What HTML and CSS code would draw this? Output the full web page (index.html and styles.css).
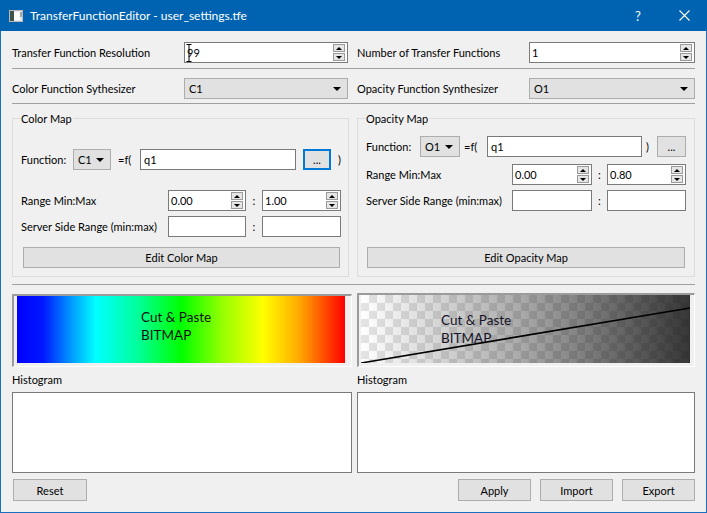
FILE: index.html
```html
<!DOCTYPE html>
<html lang="en">
<head>
<meta charset="utf-8">
<title>TransferFunctionEditor</title>
<link rel="stylesheet" href="styles.css">
</head>
<body>
<div class="window">
  <header class="titlebar">
    <svg class="app-icon" width="14" height="12" viewBox="0 0 14 12">
      <rect x="0.5" y="0.5" width="13" height="11" fill="#e9e9e9" stroke="#b8b8b8"/>
      <rect x="1" y="1" width="4" height="10" fill="#41544a"/>
      <rect x="5" y="2" width="6" height="8" fill="#ffffff"/>
      <rect x="11" y="2" width="2" height="5" fill="#a5a5a5"/>
    </svg>
    <span class="title">TransferFunctionEditor - user_settings.tfe</span>
    <span class="tb-btn help">?</span>
    <span class="tb-btn close"><svg width="11" height="11" viewBox="0 0 11 11"><path d="M0.5 0.5L10.5 10.5M10.5 0.5L0.5 10.5" stroke="#fff" stroke-width="1.1"/></svg></span>
  </header>

  <main class="content">
    <div class="form-row">
      <span class="lbl">Transfer Function Resolution</span>
      <div class="spin">
        <span class="val">99</span>
        <svg class="ibeam" width="6" height="18" viewBox="0 0 6 18"><path d="M0.5 0.5h2.5M3 0.5h2.5M3 0.5v17M0.5 17.5h5" stroke="#000" stroke-width="1" fill="none"/></svg>
        <span class="spin-btns"><i class="up"></i><i class="down"></i></span>
      </div>
      <span></span>
      <span class="lbl">Number of Transfer Functions</span>
      <div class="spin">
        <span class="val">1</span>
        <span class="spin-btns"><i class="up"></i><i class="down"></i></span>
      </div>
    </div>
    <div class="sep sep-1"></div>
    <div class="form-row row-2">
      <span class="lbl">Color Function Sythesizer</span>
      <div class="combo"><span class="cval">C1</span><i class="arrow"></i></div>
      <span></span>
      <span class="lbl">Opacity Function Synthesizer</span>
      <div class="combo"><span class="cval">O1</span><i class="arrow"></i></div>
    </div>
    <div class="sep sep-2"></div>

    <div class="groups">
      <section class="group color-group">
        <div class="group-title">Color Map</div>
        <div class="fn-row">
          <span class="fn-label">Function:</span>
          <div class="combo fn-combo"><span class="cval">C1</span><i class="arrow"></i></div>
          <span class="eqf">=f(</span>
          <div class="field fn-field">q1</div>
          <div class="btn dots focused">...</div>
          <span class="paren">)</span>
        </div>
        <div class="range-row">
          <span>Range Min:Max</span>
          <div class="spin"><span class="val">0.00</span><span class="spin-btns"><i class="up"></i><i class="down"></i></span></div>
          <span class="colon">:</span>
          <div class="spin"><span class="val">1.00</span><span class="spin-btns"><i class="up"></i><i class="down"></i></span></div>
        </div>
        <div class="range-row server-row">
          <span>Server Side Range (min:max)</span>
          <div class="field"></div>
          <span class="colon">:</span>
          <div class="field"></div>
        </div>
        <div class="btn edit-btn">Edit Color Map</div>
      </section>

      <section class="group opacity-group">
        <div class="group-title">Opacity Map</div>
        <div class="fn-row">
          <span class="fn-label">Function:</span>
          <div class="combo fn-combo"><span class="cval">O1</span><i class="arrow"></i></div>
          <span class="eqf">=f(</span>
          <div class="field fn-field">q1</div>
          <span class="paren">)</span>
          <div class="btn dots">...</div>
        </div>
        <div class="range-row">
          <span>Range Min:Max</span>
          <div class="spin"><span class="val">0.00</span><span class="spin-btns"><i class="up"></i><i class="down"></i></span></div>
          <span class="colon">:</span>
          <div class="spin"><span class="val">0.80</span><span class="spin-btns"><i class="up"></i><i class="down"></i></span></div>
        </div>
        <div class="range-row server-row">
          <span>Server Side Range (min:max)</span>
          <div class="field"></div>
          <span class="colon">:</span>
          <div class="field"></div>
        </div>
        <div class="btn edit-btn">Edit Opacity Map</div>
      </section>
    </div>

    <div class="sep sep-3"></div>

    <div class="bitmaps">
      <div class="frame color-frame">
        <div class="bitmap color-bitmap">Cut &amp; Paste<br>BITMAP</div>
      </div>
      <div class="frame opacity-frame">
        <div class="bitmap opacity-bitmap">
          <span class="bm-text">Cut &amp; Paste<br>BITMAP</span>
          <svg class="ramp" viewBox="0 0 329 68" preserveAspectRatio="none"><line x1="0" y1="68" x2="329" y2="13" stroke="#000" stroke-width="1.6"/></svg>
        </div>
      </div>
    </div>

    <div class="hist">
      <div class="hist-col">
        <div class="hist-label">Histogram</div>
        <div class="hist-box"></div>
      </div>
      <div class="hist-col">
        <div class="hist-label">Histogram</div>
        <div class="hist-box"></div>
      </div>
    </div>

    <div class="actions">
      <div class="btn act reset">Reset</div>
      <div class="spacer"></div>
      <div class="btn act">Apply</div>
      <div class="btn act">Import</div>
      <div class="btn act">Export</div>
    </div>
  </main>
</div>
</body>
</html>
```

FILE: styles.css
```css
* { box-sizing: border-box; }
html, body { margin: 0; padding: 0; }
body {
  font-family: Lato, "Noto Sans", sans-serif;
  font-size: 11px;
  color: #000;
  background: #f0f0f0;
}

.window {
  width: 707px;
  height: 513px;
  background: #f0f0f0;
  border: 1px solid #1a6fc1;
  border-top: none;
  display: flex;
  flex-direction: column;
}

/* Title bar */
.titlebar {
  height: 31px;
  margin: 0 -1px;
  background: #0063b1;
  color: #fff;
  display: flex;
  align-items: center;
  flex: none;
}
.app-icon { margin-left: 9px; flex: none; }
.title {
  margin-left: 7px;
  font-size: 12px;
  flex: 1;
}
.tb-btn {
  width: 46px;
  height: 31px;
  display: flex;
  align-items: center;
  justify-content: center;
  font-size: 13px;
}
.tb-btn.close svg { display: block; }

/* Content */
.content {
  padding: 11px 11px 0 11px;
  display: flex;
  flex-direction: column;
  flex: 1;
}

.form-row {
  display: grid;
  grid-template-columns: 172px 164px 9px 172px 166px;
  height: 21px;
  align-items: center;
}
.row-2 { margin-top: 9px; }

.sep { height: 1px; background: #a0a0a0; flex: none; }
.sep-1 { margin-top: 5px; }
.sep-2 { margin-top: 4px; }
.sep-3 { margin-top: 7px; }

/* Controls */
.spin {
  position: relative;
  height: 21px;
  border: 1px solid #7a7a7a;
  background: #fff;
  display: flex;
  align-items: center;
  padding-left: 2px;
}
.spin .val { flex: 1; }
.ibeam {
  position: absolute;
  left: 1px;
  top: 1px;
}
.spin-btns {
  display: flex;
  flex-direction: column;
  gap: 1px;
  margin-right: 2px;
}
.spin-btns i {
  display: flex;
  align-items: center;
  justify-content: center;
  width: 12px;
  height: 8px;
  border: 1px solid #9a9a9a;
  background: #e5e5e5;
}
.spin-btns i::after {
  content: "";
  border-left: 3px solid transparent;
  border-right: 3px solid transparent;
}
.spin-btns .up::after { border-bottom: 3px solid #000; }
.spin-btns .down::after { border-top: 3px solid #000; }

.combo {
  height: 21px;
  border: 1px solid #adadad;
  background: #e1e1e1;
  display: flex;
  align-items: center;
  padding: 0 6px 0 4px;
}
.cval { flex: 1; }
.arrow {
  width: 0;
  height: 0;
  border-left: 4px solid transparent;
  border-right: 4px solid transparent;
  border-top: 4px solid #000;
}

.field {
  height: 21px;
  border: 1px solid #7a7a7a;
  background: #fff;
  display: flex;
  align-items: center;
  padding-left: 3px;
}

.btn {
  height: 21px;
  border: 1px solid #adadad;
  background: #e1e1e1;
  display: flex;
  align-items: center;
  justify-content: center;
}
.btn.focused { border: 2px solid #0078d7; }

/* Group boxes */
.groups {
  margin-top: 14px;
  display: grid;
  grid-template-columns: 337px 338px;
  column-gap: 8px;
}
.group {
  border: 1px solid #dcdcdc;
  display: flex;
  flex-direction: column;
  padding: 0 0 8px 0;
}
.group-title {
  margin: -8px 0 0 7px;
  padding: 0 1px;
  line-height: 16px;
  background: #f0f0f0;
  width: max-content;
}

.fn-row {
  display: flex;
  align-items: center;
  height: 21px;
  padding-left: 8px;
}
.color-group .fn-row { margin-top: 22px; }
.opacity-group .fn-row { margin-top: 9px; }

.color-group .fn-label { width: 52px; }
.color-group .fn-combo { width: 38px; }
.color-group .eqf { margin-left: 7px; width: 22px; }
.color-group .fn-field { width: 156px; }
.color-group .dots { width: 28px; margin-left: 7px; }
.color-group .paren { margin-left: 7px; }

.opacity-group .fn-label { width: 54px; }
.opacity-group .fn-combo { width: 40px; }
.opacity-group .eqf { margin-left: 4px; width: 23px; }
.opacity-group .fn-field { width: 155px; }
.opacity-group .paren { margin-left: 4px; width: 7px; }
.opacity-group .dots { width: 29px; margin-left: 4px; }

.range-row {
  display: grid;
  align-items: center;
  height: 21px;
  padding-left: 8px;
}
.color-group .range-row { grid-template-columns: 147px 78px 16px 79px; }
.opacity-group .range-row { grid-template-columns: 146px 80px 15px 79px; }
.colon { text-align: center; }

.color-group .range-row { margin-top: 20px; }
.color-group .server-row { margin-top: 5px; }
.opacity-group .range-row { margin-top: 7px; }
.opacity-group .server-row { margin-top: 5px; }

.edit-btn { flex: none; }
.color-group .edit-btn { margin: 10px 0 0 10px; width: 317px; }
.opacity-group .edit-btn { margin: auto 0 0 9px; width: 318px; }

/* Bitmaps */
.bitmaps {
  margin-top: 8px;
  display: grid;
  grid-template-columns: 340px 338px;
  column-gap: 5px;
  align-items: start;
}
.frame {
  border-style: solid;
  border-width: 2px 1px 1px 2px;
  border-color: #9b9b9b #ffffff #ffffff #9b9b9b;
}
.color-frame {
  margin-top: 1px;
  padding: 0 6px 3px 3px;
}
.opacity-frame {
  padding: 0 4px 3px 2px;
}
.bitmap {
  font-size: 13.5px;
  line-height: 18px;
  color: #111;
}
.color-bitmap {
  height: 67px;
  padding: 12px 0 0 124px;
  background: linear-gradient(to right,
    #0000ff 0%, #0018ff 8%, #00a0ff 17%, #00ffff 24%, #00ff99 37%,
    #00ff00 50%, #99ff00 63%, #ffff00 75%, #ffaa00 86%, #ff0000 100%);
}
.opacity-bitmap {
  position: relative;
  height: 68px;
  padding: 16px 0 0 80px;
  background-image:
    linear-gradient(to right, rgba(255,255,255,0.55), rgba(130,130,130,0.7) 50%, rgba(38,38,38,0.92)),
    conic-gradient(#c4c4c4 0 25%, #ffffff 0 50%, #c4c4c4 0 75%, #ffffff 0);
  background-size: 100% 100%, 16px 16px;
  color: #141428;
}
.bm-text { position: relative; }
.ramp {
  position: absolute;
  left: 0;
  top: 0;
  width: 100%;
  height: 100%;
}

/* Histograms */
.hist {
  margin-top: 5px;
  display: grid;
  grid-template-columns: 340px 338px;
  column-gap: 5px;
}
.hist-label { line-height: 16px; }
.hist-box {
  margin-top: 4px;
  height: 81px;
  border: 1px solid #7a7a7a;
  background: #fff;
}

/* Bottom buttons */
.actions {
  margin-top: 6px;
  display: flex;
  height: 22px;
}
.act { height: 22px; width: 73px; margin-left: 9px; }
.act.reset { margin-left: 1px; width: 74px; }
.spacer { flex: 1; }
```
